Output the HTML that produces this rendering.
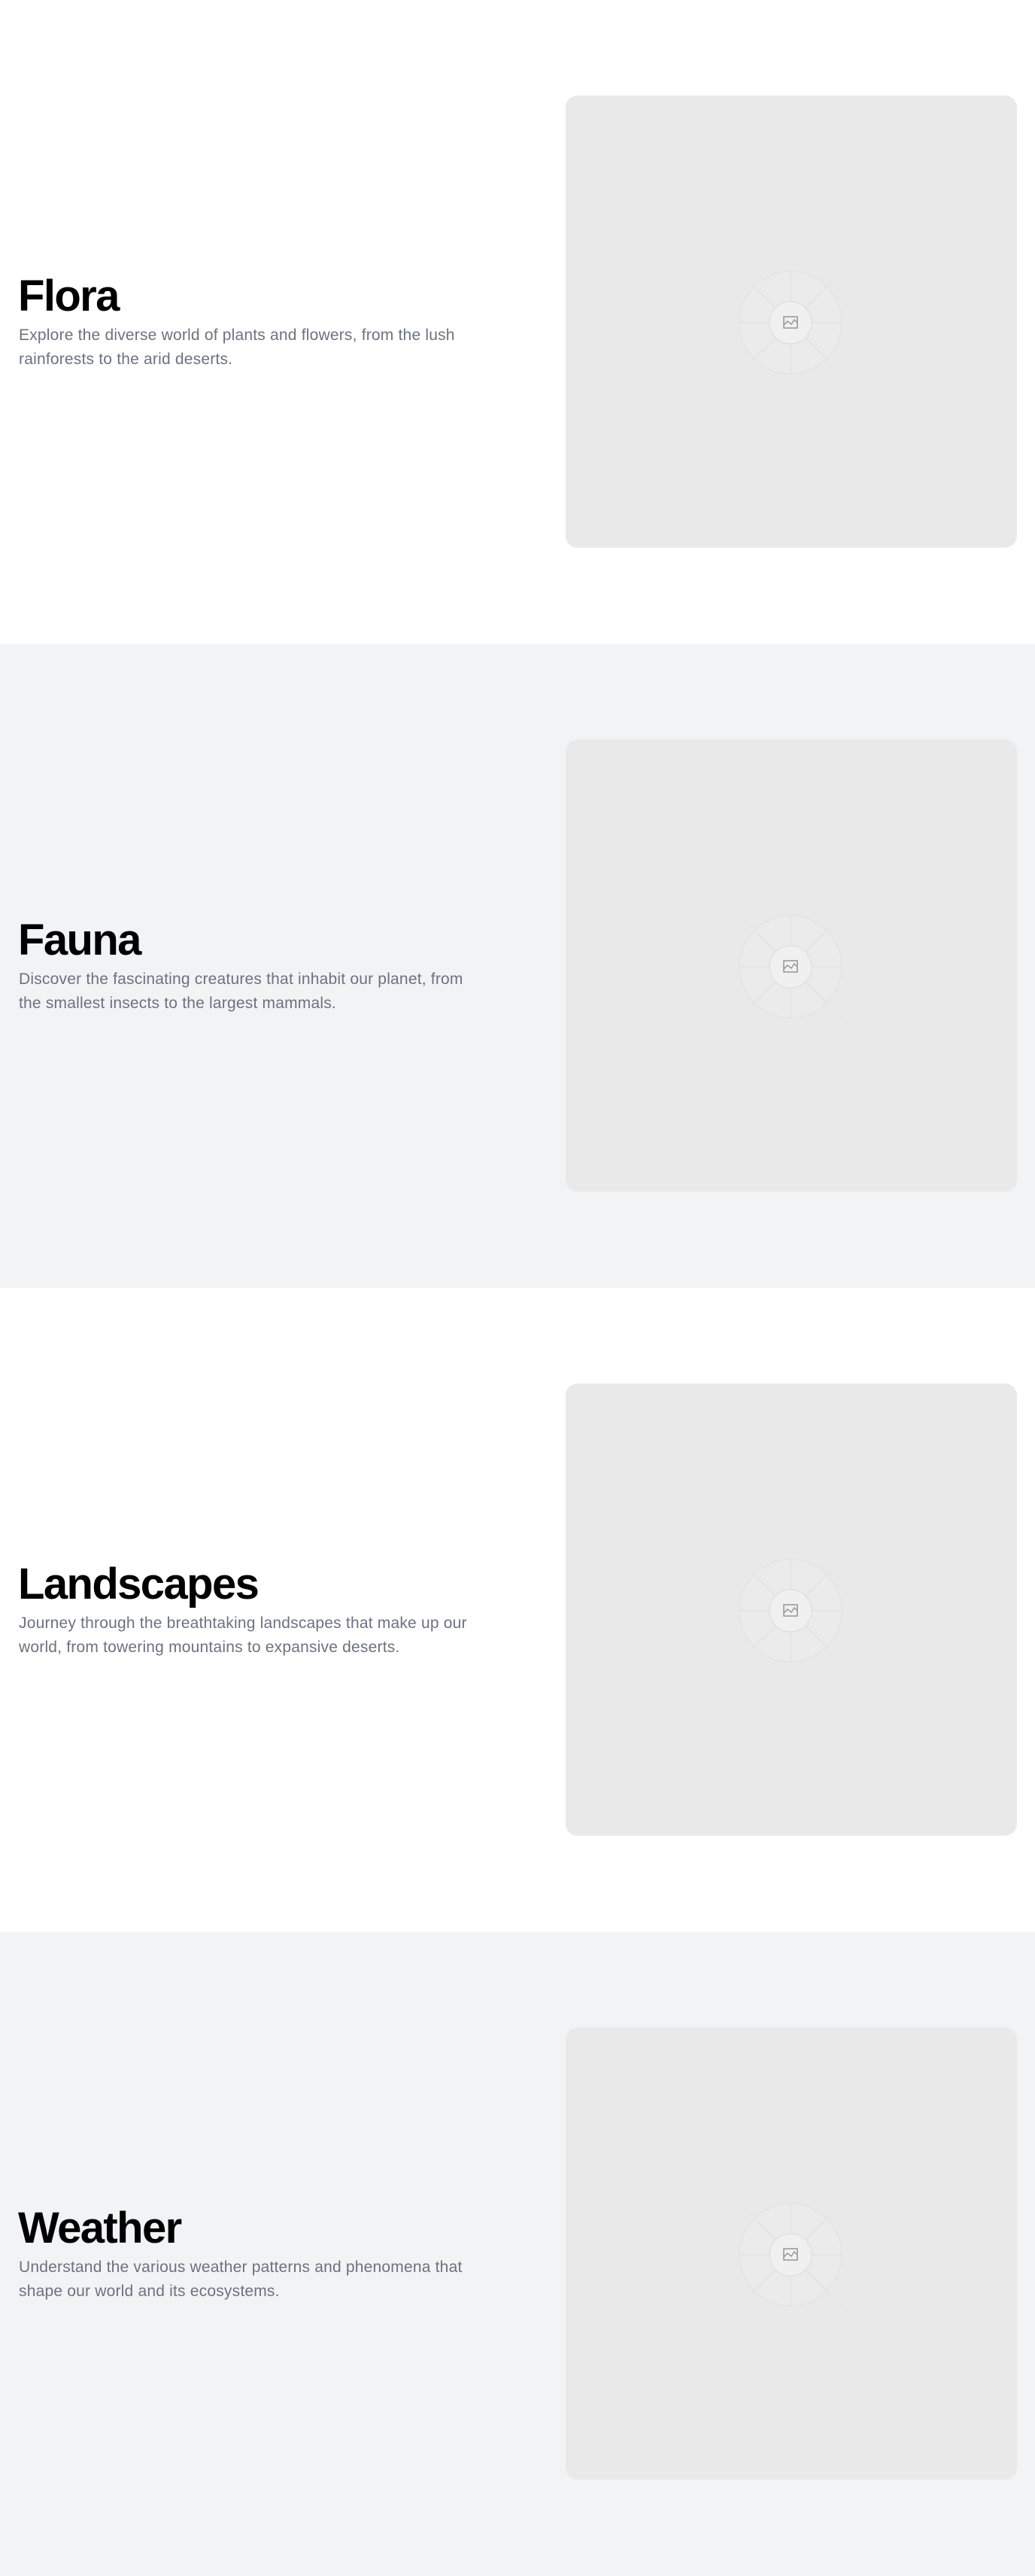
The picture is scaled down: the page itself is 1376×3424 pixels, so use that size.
<!DOCTYPE html>
<html><head><meta charset="utf-8"><style>
*{margin:0;padding:0;box-sizing:border-box}
body{width:1376px;height:3424px;font-family:"Liberation Sans",sans-serif;background:#fff;overflow:hidden}
.sec{position:relative;height:856px;width:1376px}
.alt{background:#f2f3f5}
h1{position:absolute;left:24px;top:365px;font-size:58px;line-height:58px;font-weight:700;letter-spacing:-1.6px;color:#000}
p{position:absolute;left:25px;top:430px;font-size:21px;line-height:32px;color:#6b7280;width:700px;letter-spacing:0.2px}
.box{position:absolute;left:752px;top:127px;width:600px;height:601px;background:#e9e9e9;border-radius:16px;overflow:hidden}
.box svg{position:absolute;left:199px;top:202px}
</style></head><body>
<svg width="0" height="0" style="position:absolute"><defs>
<radialGradient id="fade" cx="50%" cy="50%" r="50%"><stop offset="0.7" stop-color="#dadada"/><stop offset="1" stop-color="#dadada" stop-opacity="0.1"/></radialGradient>
<g id="ph">
<g stroke="url(#fade)" stroke-width="1.3">
<line x1="100" y1="22" x2="100" y2="178"/><line x1="22" y1="100" x2="178" y2="100"/>
<line x1="24" y1="24" x2="176" y2="176"/><line x1="176" y1="24" x2="24" y2="176"/>
</g>
<circle cx="100" cy="100" r="68" fill="#ededed" fill-opacity="0.6" stroke="#e2e2e2" stroke-width="1.2"/>
<g stroke="#e0e0e0" stroke-width="1.2">
<line x1="100" y1="32" x2="100" y2="168"/><line x1="32" y1="100" x2="168" y2="100"/>
<line x1="52" y1="52" x2="148" y2="148"/><line x1="148" y1="52" x2="52" y2="148"/>
</g>
<circle cx="100" cy="100" r="28" fill="#f0f0f0" stroke="#dedede" stroke-width="1.2"/>
<rect x="91" y="92" width="18" height="15" fill="none" stroke="#8e8e8e" stroke-width="1.4"/>
<path d="M91 103 L96 98 L101 102 L105 96 L109 100" fill="none" stroke="#8e8e8e" stroke-width="1.3"/>
</g></defs></svg>

<div class="sec"><h1>Flora</h1><p>Explore the diverse world of plants and flowers, from the lush<br>rainforests to the arid deserts.</p><div class="box"><svg width="200" height="200"><use href="#ph"/></svg></div></div>
<div class="sec alt"><h1>Fauna</h1><p>Discover the fascinating creatures that inhabit our planet, from<br>the smallest insects to the largest mammals.</p><div class="box"><svg width="200" height="200"><use href="#ph"/></svg></div></div>
<div class="sec"><h1>Landscapes</h1><p>Journey through the breathtaking landscapes that make up our<br>world, from towering mountains to expansive deserts.</p><div class="box"><svg width="200" height="200"><use href="#ph"/></svg></div></div>
<div class="sec alt"><h1>Weather</h1><p>Understand the various weather patterns and phenomena that<br>shape our world and its ecosystems.</p><div class="box"><svg width="200" height="200"><use href="#ph"/></svg></div></div>
</body></html>
